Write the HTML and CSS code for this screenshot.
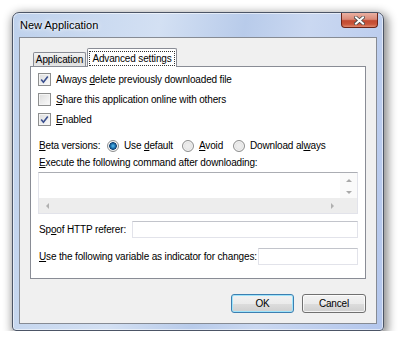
FILE: index.html
```html
<!DOCTYPE html>
<html lang="en">
<head>
    <meta charset="UTF-8">
    <title>New Application</title>
    <link rel="stylesheet" href="styles.css">
</head>
<body>
    <!-- Dialog window -->
    <div class="window">
        <div class="titlebar">
            <span class="title">New Application</span>
            <div class="close">
                <svg width="11" height="9" viewBox="0 0 11 9">
                    <path d="M2 1.5 L9 7.5 M9 1.5 L2 7.5" stroke="#4a4a4a" stroke-width="3.6" stroke-linecap="square"/>
                    <path d="M2 1.5 L9 7.5 M9 1.5 L2 7.5" stroke="#fff" stroke-width="2" stroke-linecap="square"/>
                </svg>
            </div>
        </div>

        <div class="client">
            <!-- Tabs -->
            <div class="tabs">
                <div class="tab">Application</div>
                <div class="tab active"><span class="focus">Advanced settings</span></div>
            </div>

            <!-- Tab page -->
            <div class="panel">
                <div class="check">
                    <span class="box"><svg width="11" height="11" viewBox="0 0 11 11"><path d="M2.2 5.6 L4.4 8.2 L8.8 2.4" fill="none" stroke="#3a4f8e" stroke-width="1.6"/></svg></span>
                    <span>Always <u>d</u>elete previously downloaded file</span>
                </div>
                <div class="check">
                    <span class="box"></span>
                    <span><u>S</u>hare this application online with others</span>
                </div>
                <div class="check">
                    <span class="box"><svg width="11" height="11" viewBox="0 0 11 11"><path d="M2.2 5.6 L4.4 8.2 L8.8 2.4" fill="none" stroke="#3a4f8e" stroke-width="1.6"/></svg></span>
                    <span><u>E</u>nabled</span>
                </div>

                <div class="beta">
                    <span class="beta-label"><u>B</u>eta versions:</span>
                    <span class="option first"><span class="radio on"></span><span>Use <u>d</u>efault</span></span>
                    <span class="option second"><span class="radio"></span><span><u>A</u>void</span></span>
                    <span class="option"><span class="radio"></span><span>Download al<u>w</u>ays</span></span>
                </div>

                <div class="label"><u>E</u>xecute the following command after downloading:</div>
                <div class="textarea">
                    <div class="text"></div>
                    <div class="vscroll">
                        <span class="arrow up"></span>
                        <span class="arrow down"></span>
                    </div>
                    <div class="hscroll">
                        <span class="arrow left"></span>
                        <span class="arrow right"></span>
                    </div>
                    <div class="corner"></div>
                </div>

                <div class="field first-field">
                    <span>Sp<u>o</u>of HTTP referer:</span>
                    <div class="input wide"></div>
                </div>
                <div class="field">
                    <span><u>U</u>se the following variable as indicator for changes:</span>
                    <div class="input"></div>
                </div>
            </div>

            <!-- Dialog buttons -->
            <div class="buttons">
                <button class="btn default">OK</button>
                <button class="btn cancel">Cancel</button>
            </div>
        </div>
    </div>
</body>
</html>
```

FILE: styles.css
```css
/* Page */
body {
    margin: 0;
    background: #fff;
    font-family: "Liberation Sans", Arial, sans-serif;
    font-size: 10px;
    letter-spacing: -0.15px;
    color: #000;
    white-space: nowrap;
}

u {
    text-decoration: underline;
    text-underline-offset: 1px;
}

/* Glass window frame */
.window {
    box-sizing: border-box;
    width: 372px;
    height: 319px;
    margin: 12px 0 0 12px;
    padding: 0 6px 6px 6px;
    border: 1px solid #4c5566;
    border-radius: 7px 7px 4px 4px;
    background: linear-gradient(100deg, #bed1ec 0%, #d3e0f3 35%, #b8cbea 55%, #cad8f1 70%, #b3c6ec 100%);
    box-shadow: inset 0 0 0 1px rgba(255, 255, 255, 0.55), 2px 3px 10px 2px rgba(0, 0, 0, 0.45);
}

.titlebar {
    height: 24px;
    display: flex;
    justify-content: space-between;
    align-items: flex-start;
}

.title {
    padding: 6px 0 0 1px;
    font-size: 11px;
    letter-spacing: 0;
    text-shadow: 0 0 6px #fff, 0 0 3px #fff;
}

/* Close button */
.close {
    width: 37px;
    height: 15px;
    margin-right: -1px;
    box-sizing: border-box;
    border: 1px solid #6b2418;
    border-top: none;
    border-radius: 0 0 4px 4px;
    background: linear-gradient(#eab0a2 0%, #d98a78 45%, #c24a31 55%, #c9553a 80%, #e08a6f 100%);
    display: flex;
    justify-content: center;
    align-items: center;
}

/* Client area */
.client {
    box-sizing: border-box;
    height: 287px;
    border: 1px solid #868b94;
    background: #f0f0f0;
    padding: 10px 10px 0 10px;
}

/* Tabs */
.tabs {
    display: flex;
    align-items: flex-end;
    height: 18px;
    padding-left: 3px;
}

.tab {
    box-sizing: border-box;
    flex-shrink: 0;
    width: 53px;
    height: 14px;
    margin-right: 1px;
    border: 1px solid #898c95;
    border-bottom: none;
    border-radius: 2px 2px 0 0;
    background: linear-gradient(#f3f3f3, #e3e3e3 50%, #d9d9d9 51%, #e6e6e6);
    text-align: center;
    line-height: 13px;
}

.tab.active {
    position: relative;
    z-index: 1;
    width: 90px;
    height: 19px;
    margin-bottom: -1px;
    background: #fff;
    padding-top: 2px;
    line-height: 13px;
}

.focus {
    display: inline-block;
    padding: 0 2px;
    border: 1px dotted #333;
}

/* Tab page */
.panel {
    box-sizing: border-box;
    height: 213px;
    border: 1px solid #898c95;
    background: #fff;
    padding: 6px 7px;
}

/* Checkboxes */
.check {
    display: flex;
    align-items: center;
    height: 13px;
    margin-bottom: 7px;
}

.box {
    box-sizing: border-box;
    flex-shrink: 0;
    width: 13px;
    height: 13px;
    margin-right: 5px;
    border: 1px solid #8e8f8f;
    background: linear-gradient(135deg, #dcdcdc, #fbfbfb);
    box-shadow: inset 0 0 0 1px #f4f4f4;
    display: flex;
    align-items: center;
    justify-content: center;
}

/* Radio buttons */
.beta {
    display: flex;
    align-items: center;
    height: 13px;
    margin-top: 13px;
    padding-left: 1px;
}

.beta-label {
    flex-shrink: 0;
    width: 68px;
}

.option {
    display: flex;
    align-items: center;
    flex-shrink: 0;
}

.option.first {
    width: 75px;
}

.option.second {
    width: 51px;
}

.radio {
    box-sizing: border-box;
    flex-shrink: 0;
    width: 12px;
    height: 12px;
    margin-right: 5px;
    border: 1px solid #8e8f8f;
    border-radius: 50%;
    background: radial-gradient(circle, #ececec 30%, #d4d4d4 100%);
    box-shadow: inset 0 0 0 1px #f6f6f6;
}

.radio.on {
    background: radial-gradient(circle, #5cc3f3 0, #1f75b3 2.2px, #0e3f70 3.6px, #f4f4f4 4.2px);
}

/* Multi-line text box */
.label {
    margin-top: 5px;
    height: 12px;
    line-height: 12px;
    padding-left: 1px;
}

.textarea {
    box-sizing: border-box;
    height: 42px;
    margin-top: 3px;
    border: 1px solid #e2e3ea;
    border-top-color: #abadb3;
    display: grid;
    grid-template-columns: 1fr 17px;
    grid-template-rows: 1fr 15px;
}

.text {
    background: #fff;
}

.vscroll {
    background: #fafafa;
    display: flex;
    flex-direction: column;
    align-items: center;
    justify-content: space-between;
    padding: 6px 0 4px;
}

.hscroll {
    background: #ededed;
    display: flex;
    align-items: center;
    justify-content: space-between;
    padding: 0 6px 0 7px;
}

.corner {
    background: #ededed;
}

.arrow {
    width: 0;
    height: 0;
    border: 3px solid transparent;
}

.arrow.up {
    border-bottom: 3px solid #a9a9a9;
    border-top-width: 0;
}

.arrow.down {
    border-top: 3px solid #a9a9a9;
    border-bottom-width: 0;
}

.arrow.left {
    border-right: 3px solid #b0b0b0;
    border-left-width: 0;
}

.arrow.right {
    border-left: 3px solid #b0b0b0;
    border-right-width: 0;
}

/* Single-line text boxes */
.field {
    display: flex;
    align-items: center;
    justify-content: space-between;
    margin-top: 10px;
    padding-left: 1px;
}

.field.first-field {
    margin-top: 7px;
}

.input {
    box-sizing: border-box;
    flex-shrink: 0;
    width: 100px;
    height: 17px;
    border: 1px solid #e2e3ea;
    border-top-color: #c2c4cb;
    background: #fff;
}

.input.wide {
    width: 226px;
}

/* Dialog buttons */
.buttons {
    display: flex;
    justify-content: flex-end;
    gap: 8px;
    margin-top: 15px;
}

.btn {
    box-sizing: border-box;
    width: 63px;
    height: 19px;
    padding: 0;
    border: 1px solid #707070;
    border-radius: 3px;
    background: linear-gradient(#f2f2f2 0%, #ebebeb 50%, #dddddd 51%, #cfcfcf 100%);
    box-shadow: inset 0 0 0 1px rgba(255, 255, 255, 0.75);
    font-family: "Liberation Sans", Arial, sans-serif;
    font-size: 10px;
    letter-spacing: -0.15px;
    color: #000;
}

.btn.cancel {
    width: 64px;
}

.btn.default {
    border-color: #3c7fb1;
    box-shadow: inset 0 0 0 1px #9fe4fb;
}
```
